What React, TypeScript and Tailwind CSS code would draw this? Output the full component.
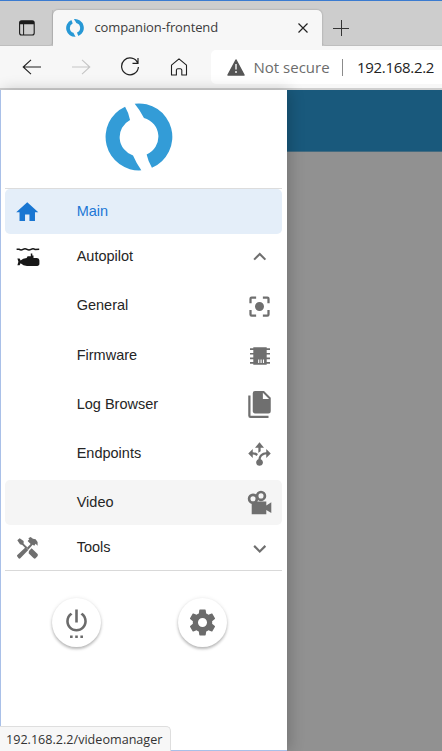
import React from "react";

const ui = "font-['Open_Sans','Noto_Sans',sans-serif]";

const paths = {
  home: "M10,20V14H14V20H19V12H22L12,3L2,12H5V20H10Z",
  up: "M7.41,15.41L12,10.83L16.59,15.41L18,14L12,8L6,14L7.41,15.41Z",
  down: "M7.41,8.58L12,13.17L16.59,8.58L18,10L12,16L6,10L7.41,8.58Z",
  focus:
    "M12,8A4,4 0 1,0 12,16A4,4 0 1,0 12,8M19,19H15V21H19A2,2 0 0,0 21,19V15H19M19,3H15V5H19V9H21V5A2,2 0 0,0 19,3M5,5H9V3H5A2,2 0 0,0 3,5V9H5M5,15H3V19A2,2 0 0,0 5,21H9V19H5V15Z",
  files:
    "M15,7H20.5L15,1.5V7M8,0H16L22,6V18A2,2 0 0,1 20,20H8C6.89,20 6,19.1 6,18V2A2,2 0 0,1 8,0M4,4V22H20V24H4A2,2 0 0,1 2,22V4H4Z",
  decision:
    "M9.64,13.4C8.63,12.5 7.34,12.03 6,12V15L2,11L6,7V10C7.67,10 9.3,10.57 10.63,11.59C10.22,12.15 9.89,12.76 9.64,13.4M18,15V12C17.5,12 13.5,12.16 13.05,16.2C14.61,16.75 15.43,18.47 14.88,20.03C14.33,21.59 12.61,22.41 11.05,21.86C9.5,21.3 8.67,19.59 9.22,18.03C9.5,17.17 10.2,16.5 11.05,16.2C11.34,12.61 14.4,9.88 18,10V7L22,11L18,15M13,6H16L12,1L8,6H11V10.6C11.6,10 12.3,9.5 13,9.1V6Z",
  power:
    "M7 24h2v-2H7v2zm4 0h2v-2h-2v2zm2-22h-2v10h2V2zm3.56 2.44l-1.45 1.45C16.84 6.94 18 8.83 18 11c0 3.31-2.69 6-6 6s-6-2.69-6-6c0-2.17 1.16-4.06 2.88-5.12L7.44 4.44C5.36 5.88 4 8.28 4 11c0 4.42 3.58 8 8 8s8-3.58 8-8c0-2.72-1.36-5.12-3.44-6.56zM15 24h2v-2h-2v2z",
  cog: "M12,15.5A3.5,3.5 0 0,1 8.5,12A3.5,3.5 0 0,1 12,8.5A3.5,3.5 0 0,1 15.5,12A3.5,3.5 0 0,1 12,15.5M19.43,12.97C19.47,12.65 19.5,12.33 19.5,12C19.5,11.67 19.47,11.34 19.43,11L21.54,9.37C21.73,9.22 21.78,8.95 21.66,8.73L19.66,5.27C19.54,5.05 19.27,4.96 19.05,5.05L16.56,6.05C16.04,5.66 15.5,5.32 14.87,5.07L14.5,2.42C14.46,2.18 14.25,2 14,2H10C9.75,2 9.54,2.18 9.5,2.42L9.13,5.07C8.5,5.32 7.96,5.66 7.44,6.05L4.95,5.05C4.73,4.96 4.46,5.05 4.34,5.27L2.34,8.73C2.21,8.95 2.27,9.22 2.46,9.37L4.57,11C4.53,11.34 4.5,11.67 4.5,12C4.5,12.33 4.53,12.65 4.57,12.97L2.46,14.63C2.27,14.78 2.21,15.05 2.34,15.27L4.34,18.73C4.46,18.95 4.73,19.03 4.95,18.95L7.44,17.94C7.96,18.34 8.5,18.68 9.13,18.93L9.5,21.58C9.54,21.82 9.75,22 10,22H14C14.25,22 14.46,21.82 14.5,21.58L14.87,18.93C15.5,18.67 16.04,18.34 16.56,17.94L19.05,18.95C19.27,19.03 19.54,18.95 19.66,18.73L21.66,15.27C21.78,15.05 21.73,14.78 21.54,14.63L19.43,12.97Z",
};

function Glyph({ d, className = "size-[27px]" }: { d: string; className?: string }) {
  return (
    <svg viewBox="0 0 24 24" fill="currentColor" className={`shrink-0 ${className}`}>
      <path d={d} />
    </svg>
  );
}

function Logo({ className }: { className: string }) {
  return (
    <svg viewBox="46 37 204 205" fill="currentColor" className={`shrink-0 ${className}`}>
      <path d="M106 48A100.7 100.7 0 0 0 155 240Q140 218 130 195A58.2 58.2 0 0 1 121 88Q117 66 106 48Z" />
      <path d="M135 39A100.9 100.9 0 0 1 187 232Q176 214 171 192A58.3 58.3 0 0 0 163 82Q151 58 135 39Z" />
    </svg>
  );
}

function Submarine() {
  return (
    <svg viewBox="0 0 24 20" className="h-5 w-6 shrink-0 overflow-visible text-[#181818]" fill="currentColor">
      <path
        d="M.6 2.2H3Q5 3.6 7 2.4T11 2.4T15 2.4T19 2.4L23.2 2.2"
        fill="none"
        stroke="currentColor"
        strokeWidth="1.5"
      />
      <path d="M1.4 11.5H3.6L4.6 13.6Q7 11.2 10.6 10.9L11.6 9.2H14.8V6.6H16.3V8.6H17.5V10.9H21Q23.4 11.3 23.4 13.5V17Q23.2 19 20 19H11Q7.2 18.7 4.6 16.2L3.6 18.2H1.4L2.4 14.8Z" />
    </svg>
  );
}

function Chip() {
  return (
    <svg viewBox="0 0 24 24" className="size-6 shrink-0" fill="currentColor">
      <path d="M5.3 3.3H18.7V20.7H5.3ZM2 4.2H6V5.9H2ZM2 8.9H6V10.6H2ZM2 13.5H6V15.2H2ZM2 18.1H6V19.8H2ZM18 4.2H22V5.9H18ZM18 8.9H22V10.6H18ZM18 13.5H22V15.2H18ZM18 18.1H22V19.8H18Z" />
      <path d="M10.7 15.6V19M13.1 15.6V19M15.5 15.6V19" stroke="white" strokeWidth="1.1" />
    </svg>
  );
}

function Camera() {
  return (
    <svg viewBox="0 0 24 24" className="size-6 shrink-0 overflow-visible" fill="currentColor">
      <path d="M3.7 10.5H18.3V14.6L23.3 11.3V22L18.3 19V23.3H3.7Z" />
      <circle cx="5" cy="7.7" r="3.9" fill="#f5f5f5" stroke="currentColor" strokeWidth="2.7" />
      <circle cx="13" cy="4.9" r="3.9" fill="#f5f5f5" stroke="currentColor" strokeWidth="2.7" />
    </svg>
  );
}

function Tools() {
  return (
    <svg viewBox="50 198 65 68" className="h-[22.6px] w-[21.6px] shrink-0" fill="currentColor">
      <path d="M51 208L58 202L70 210L70 218L81 229L77 233L66 222L59 220Z" />
      <path d="M86 240L94 232L112 249Q114 253 111 257L105 263Q101 264 98 260L85 247Z" />
      <path d="M51 252L76 229L84 237L60 262Q57 265 54 261L51 257Q49 254 51 252Z" />
      <path d="M79 231L91 219L82 210L87 205L84 202L91 198L98 203L106 205L112 213V224L106 218L102 224L97 221L84 236Z" />
    </svg>
  );
}

function Row({
  label,
  left,
  right,
  className = "",
}: {
  label: string;
  left?: React.ReactNode;
  right?: React.ReactNode;
  className?: string;
}) {
  return (
    <div
      className={`flex h-[45px] shrink-0 items-center rounded-[5px] pt-px text-[14.5px] text-[#252525] ${className}`}
    >
      <div className="flex w-[45px] shrink-0 justify-center text-[#6f6f6f]">{left}</div>
      <span className="ml-[26.7px] flex-1 whitespace-nowrap">{label}</span>
      <div className="flex w-[45px] shrink-0 justify-center text-[#6f6f6f]">{right}</div>
    </div>
  );
}

function RoundButton({ d }: { d: string }) {
  return (
    <button className="flex size-[49px] items-center justify-center rounded-full bg-white text-[#6b6b6b] shadow-[0_2px_3px_rgba(0,0,0,0.26),0_0_4px_rgba(0,0,0,0.08)]">
      <Glyph d={d} className="size-[31px]" />
    </button>
  );
}

function TabStrip() {
  return (
    <div className="flex h-[46px] shrink-0 items-end border-t border-[#3b7bd0] bg-[#cdcdcd]">
      <div className="flex h-9 w-[52.5px] items-center justify-center rounded-br-[4px] border-r border-b border-[#bebebe] pl-[3px]">
        <svg viewBox="0 0 16 16" className="size-4" fill="none" stroke="#1b1b1b">
          <rect x=".6" y=".8" width="14.6" height="14.2" rx="2" strokeWidth="1.1" />
          <path d="M1 2.6H15" strokeWidth="3.3" />
          <path d="M4.6 4V15" strokeWidth="1" />
        </svg>
      </div>
      <div className="flex h-9 w-[269px] items-center rounded-t-[5px] bg-[#f7f7f7] pr-[13.5px] pl-[13px] shadow-[0_0_2px_rgba(0,0,0,0.3)] [clip-path:inset(-3px_-3px_0_-3px)]">
        <Logo className="size-[18px] text-[#2798d5]" />
        <span className="ml-[11px] flex-1 text-[13px] tracking-[-0.13px] whitespace-nowrap text-[#3c3c3c]">
          companion-frontend
        </span>
        <svg viewBox="0 0 10 10" className="size-[10px]" stroke="#222" strokeWidth="1.2">
          <path d="M.5 .5L9.5 9.5M9.5 .5L.5 9.5" />
        </svg>
      </div>
      <div className="flex h-9 flex-1 items-center rounded-bl-[4px] border-b border-[#bebebe] pl-[11px]">
        <svg viewBox="0 0 16 16" className="size-4" stroke="#343434" strokeWidth="1">
          <path d="M8.5 0V16M0 8.5H16" />
        </svg>
      </div>
    </div>
  );
}

function Toolbar() {
  return (
    <div className="flex h-[44px] shrink-0 items-center border-b-2 border-[#cfcfcf] bg-[#f7f7f7] pl-[22px]">
      <svg viewBox="0 0 20 18" className="h-[18px] w-5" fill="none" stroke="#202020" strokeWidth="1.1">
        <path d="M19 9H1.2M9 1.8L1.2 9L9 16.2" />
      </svg>
      <svg viewBox="0 0 20 18" className="ml-[29px] h-[18px] w-5" fill="none" stroke="#c5c5c5" strokeWidth="1.1">
        <path d="M1 9H18.8M11 1.8L18.8 9L11 16.2" />
      </svg>
      <svg viewBox="0 0 20 20" className="ml-[29px] size-5" fill="none" stroke="#202020" strokeWidth="1.2">
        <path d="M17.8 6.2A8.4 8.4 0 1 0 18.4 10M18 1V6.4H12.5" />
      </svg>
      <svg viewBox="0 0 18 20" className="ml-[30px] h-5 w-[18px]" fill="none" stroke="#202020" strokeWidth="1.1">
        <path
          d="M1.5 8.2L9 1.8L16.5 8.2V18H11.8V13.2Q11.6 11.8 10.4 11.8H7.8Q6.6 11.8 6.4 13.2V18H1.5Z"
          strokeLinejoin="round"
        />
      </svg>
      <div className="ml-[23px] flex h-[34px] flex-1 items-center overflow-hidden rounded-l-[5px] bg-white pl-[15.5px]">
        <svg viewBox="0 0 18 17" className="h-[17px] w-[18px] shrink-0">
          <path d="M9 1L17 16H1Z" fill="#555" stroke="#555" strokeWidth="1.5" strokeLinejoin="round" />
          <path d="M9 5V10.5M9 12V14" stroke="#eee" strokeWidth="1.5" />
        </svg>
        <span className="ml-[9px] w-[75px] shrink-0 text-[15px] whitespace-nowrap text-[#6c6c6c]">Not secure</span>
        <div className="ml-[13px] h-[17px] w-px shrink-0 bg-[#8b8b8b]" />
        <span className="ml-[14.5px] text-[15px] tracking-[-0.3px] whitespace-nowrap text-[#222]">192.168.2.2</span>
      </div>
    </div>
  );
}

export default function App() {
  return (
    <div className={`relative flex h-[751px] w-[442px] flex-col overflow-hidden bg-white ${ui}`}>
      <TabStrip />
      <Toolbar />
      <div className="flex min-h-0 flex-1">
        <nav className="z-10 flex w-[286.5px] shrink-0 flex-col border-b border-l border-b-[#a9c0e8] border-l-[#a9c0e8] bg-white pr-[4.5px] pl-1 font-['Liberation_Sans',Arial,sans-serif] shadow-[3px_0_14px_rgba(0,0,0,0.2)]">
          <div className="flex h-[99px] shrink-0 justify-center border-b border-[#dcdcdc] pt-[12.5px] pr-[8.5px]">
            <Logo className="size-[68px] text-[#339cd7]" />
          </div>
          <Row
            label="Main"
            className="bg-[#e4eef9] text-[#2177d6]!"
            left={<Glyph d={paths.home} className="size-[26.5px] text-[#1976d2]" />}
          />
          <Row label="Autopilot" left={<Submarine />} right={<Glyph d={paths.up} className="size-[25.5px]" />} />
          <div className="flex flex-col gap-[4.25px] pt-[4.25px]">
            <Row label="General" right={<Glyph d={paths.focus} />} />
            <Row label="Firmware" right={<Chip />} />
            <Row label="Log Browser" right={<Glyph d={paths.files} />} />
            <Row label="Endpoints" right={<Glyph d={paths.decision} />} />
            <Row label="Video" className="bg-[#f5f5f5]" right={<Camera />} />
          </div>
          <Row label="Tools" left={<Tools />} right={<Glyph d={paths.down} className="size-[25.5px]" />} />
          <div className="h-px shrink-0 bg-[#d9d9d9]" />
          <div className="flex gap-[76.5px] pt-[27px] pl-[47px]">
            <RoundButton d={paths.power} />
            <RoundButton d={paths.cog} />
          </div>
        </nav>
        <main className="flex flex-1 flex-col bg-[#919191]">
          <div className="h-[62px] border-b border-[#446b80] bg-[#19597c]" />
        </main>
      </div>
      <div className="absolute bottom-0 left-0 z-20 flex h-[25px] w-[171px] items-center rounded-tr-[5px] border-t border-r border-[#dedede] bg-[#f7f7f7] pt-[2px] pl-[6px] text-[12.6px] whitespace-nowrap text-[#333]">
        192.168.2.2/videomanager
      </div>
    </div>
  );
}
